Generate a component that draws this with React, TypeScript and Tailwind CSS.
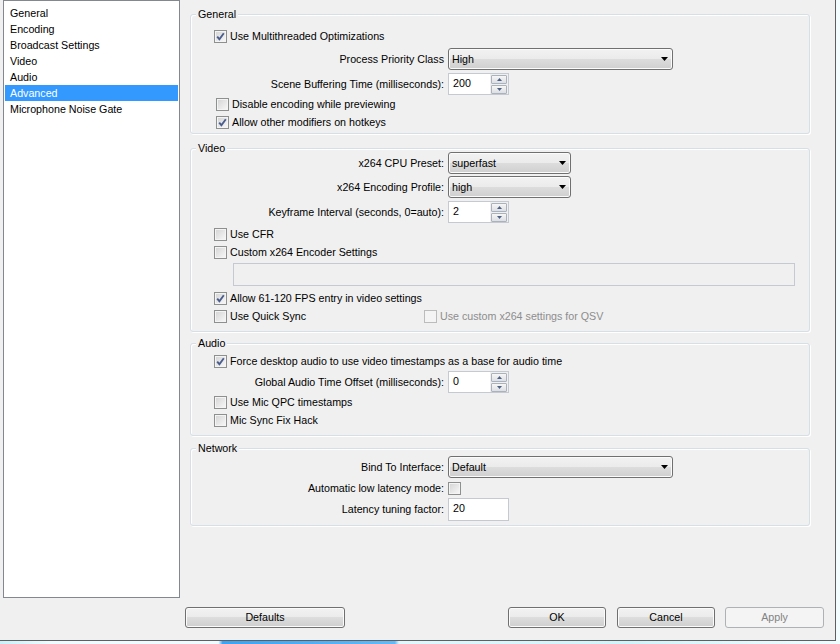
import React from "react";
import clsx from "clsx";

const navItems = [
  "General",
  "Encoding",
  "Broadcast Settings",
  "Video",
  "Audio",
  "Advanced",
  "Microphone Noise Gate",
];

function Box({ checked, disabled }: { checked?: boolean; disabled?: boolean }) {
  return (
    <span
      className={clsx(
        "flex h-[13px] w-[13px] shrink-0 items-center justify-center border",
        disabled
          ? "border-[#bcbcbc] bg-[#f4f4f4]"
          : "border-[#8e8f8f] bg-[linear-gradient(135deg,#d3d3d3,#f9f9f9)] shadow-[inset_0_0_0_1px_#f4f4f4]"
      )}
    >
      {checked && (
        <svg width="11" height="11" viewBox="0 0 11 11">
          <path d="M2.2 5.6 L4.4 8.2 L8.8 2.2" fill="none" stroke="#4a5d8e" strokeWidth="1.9" />
        </svg>
      )}
    </span>
  );
}

function Check({
  label,
  checked,
  disabled,
  className,
}: {
  label: string;
  checked?: boolean;
  disabled?: boolean;
  className?: string;
}) {
  return (
    <label className={clsx("flex h-[18px] items-center gap-[3px]", disabled && "text-[#8d8d8d]", className)}>
      <Box checked={checked} disabled={disabled} />
      <span>{label}</span>
    </label>
  );
}

function Field({ label, children, className }: { label: string; children: React.ReactNode; className?: string }) {
  return (
    <div className={clsx("flex items-center", className)}>
      <span className="w-[253px] text-right">{label}</span>
      <div className="ml-[4px] flex">{children}</div>
    </div>
  );
}

function Select({ value, className }: { value: string; className?: string }) {
  return (
    <div
      className={clsx(
        "flex h-[22px] items-center justify-between rounded-[3px] border border-[#707070] bg-[linear-gradient(#f2f2f2_0%,#ebebeb_50%,#dddddd_50%,#cfcfcf_100%)] pl-[3px] pr-[4px] shadow-[inset_0_0_0_1px_#fbfbfb]",
        className
      )}
    >
      <span>{value}</span>
      <svg width="7" height="4" viewBox="0 0 7 4">
        <polygon points="0,0 7,0 3.5,4" fill="#000" />
      </svg>
    </div>
  );
}

function SpinBtn({ up }: { up?: boolean }) {
  return (
    <span className="flex h-[9px] w-[16px] items-center justify-center rounded-[1px] border border-[#a9b2bd] bg-[linear-gradient(#f6f6f6,#dcdfe3)]">
      <svg width="5" height="3" viewBox="0 0 5 3">
        <polygon points={up ? "0,3 5,3 2.5,0" : "0,0 5,0 2.5,3"} fill="#4d6185" />
      </svg>
    </span>
  );
}

function Spin({ value }: { value: string }) {
  return (
    <div className="flex h-[22px] w-[61px] border border-[#c5cad2] bg-white">
      <span className="flex-1 pl-[4px] leading-[18px]">{value}</span>
      <div className="flex flex-col justify-center gap-[1px] bg-[#f0f0f0] px-[1px]">
        <SpinBtn up />
        <SpinBtn />
      </div>
    </div>
  );
}

function Group({ title, className, children }: { title: string; className?: string; children: React.ReactNode }) {
  return (
    <div
      className={clsx(
        "relative w-[620px] rounded-[3px] border border-[#d5dfe5] shadow-[1px_1px_0_#ffffff,inset_1px_1px_0_#ffffff]",
        className
      )}
    >
      <span className="absolute left-[5px] top-[-8px] bg-[#f0f0f0] px-[2px] leading-[14px]">{title}</span>
      {children}
    </div>
  );
}

function Button({ label, disabled, className }: { label: string; disabled?: boolean; className?: string }) {
  return (
    <button
      className={clsx(
        "flex h-[21px] items-center justify-center rounded-[3px] border",
        disabled
          ? "border-[#adb2b5] bg-[#f4f4f4] text-[#838383]"
          : "border-[#707070] bg-[linear-gradient(#f2f2f2_0%,#ebebeb_50%,#dddddd_50%,#cfcfcf_100%)] shadow-[inset_0_0_0_1px_#fbfbfb]",
        className
      )}
    >
      {label}
    </button>
  );
}

export default function App() {
  return (
    <div className="flex h-[644px] w-[840px] flex-col bg-[#f3fdff] font-['Liberation_Sans',Arial,sans-serif] text-[10.7px] text-black">
      <div className="flex h-[641px] w-[836px] shrink-0 flex-col border-b border-r border-[#5f5f5f] bg-[#f0f0f0]">
        <div className="flex h-[598px]">
          <ul className="ml-[3px] h-[598px] w-[177px] border border-[#828790] bg-white px-[1px] pt-[4px]">
            {navItems.map((item) => (
              <li
                key={item}
                className={clsx(
                  "h-[16px] pl-[5px] leading-[16px]",
                  item === "Advanced" && "bg-[#3399ff] text-white"
                )}
              >
                {item}
              </li>
            ))}
          </ul>

          <div className="flex flex-col pl-[10px] pt-[14px]">
            <Group title="General" className="pb-[2px]">
              <Check label="Use Multithreaded Optimizations" checked className="mt-[12px] pl-[23px]" />
              <Field label="Process Priority Class" className="mt-[3px]">
                <Select value="High" className="w-[225px]" />
              </Field>
              <Field label="Scene Buffering Time (milliseconds):" className="mt-[3px]">
                <Spin value="200" />
              </Field>
              <Check label="Disable encoding while previewing" className="pl-[25px]" />
              <Check label="Allow other modifiers on hotkeys" checked className="pl-[25px]" />
            </Group>

            <Group title="Video" className="mt-[14px] pb-[6px]">
              <Field label="x264 CPU Preset:" className="mt-[3px]">
                <Select value="superfast" className="w-[123px]" />
              </Field>
              <Field label="x264 Encoding Profile:" className="mt-[2px]">
                <Select value="high" className="w-[123px]" />
              </Field>
              <Field label="Keyframe Interval (seconds, 0=auto):" className="mt-[3px]">
                <Spin value="2" />
              </Field>
              <Check label="Use CFR" className="mt-[2px] pl-[23px]" />
              <Check label="Custom x264 Encoder Settings" className="pl-[23px]" />
              <div className="ml-[42px] mt-[2px] h-[23px] w-[562px] border border-[#c5cad2] bg-[#f0f0f0]" />
              <Check label="Allow 61-120 FPS entry in video settings" checked className="mt-[3px] pl-[23px]" />
              <div className="flex pl-[23px]">
                <Check label="Use Quick Sync" className="w-[210px]" />
                <Check label="Use custom x264 settings for QSV" disabled />
              </div>
            </Group>

            <Group title="Audio" className="mt-[11px] pb-[6px]">
              <Check
                label="Force desktop audio to use video timestamps as a base for audio time"
                checked
                className="mt-[8px] pl-[23px]"
              />
              <Field label="Global Audio Time Offset (milliseconds):" className="mt-[1px]">
                <Spin value="0" />
              </Field>
              <Check label="Use Mic QPC timestamps" className="pl-[23px]" />
              <Check label="Mic Sync Fix Hack" className="pl-[23px]" />
            </Group>

            <Group title="Network" className="mt-[12px] pb-[4px]">
              <Field label="Bind To Interface:" className="mt-[7px]">
                <Select value="Default" className="w-[225px]" />
              </Field>
              <Field label="Automatic low latency mode:" className="mt-[1px] h-[18px]">
                <Box />
              </Field>
              <Field label="Latency tuning factor:" className="mt-[1px]">
                <div className="h-[23px] w-[61px] border border-[#c5cad2] bg-white pl-[4px] leading-[19px]">20</div>
              </Field>
            </Group>
          </div>
        </div>

        <div className="mt-[9px] flex">
          <Button label="Defaults" className="ml-[185px] w-[160px]" />
          <Button label="OK" className="ml-[163px] w-[98px]" />
          <Button label="Cancel" className="ml-[11px] w-[98px]" />
          <Button label="Apply" disabled className="ml-[10px] w-[99px]" />
        </div>
      </div>
      <div className="h-[3px] w-full bg-[linear-gradient(90deg,#c9f1fa_0%,#eefcff_6%,#eefcff_26%,#3aa3f3_26.5%,#62b9f7_47%,#dff8fe_47.5%,#d0f4fb_75%,#effdff_100%)]" />
    </div>
  );
}
